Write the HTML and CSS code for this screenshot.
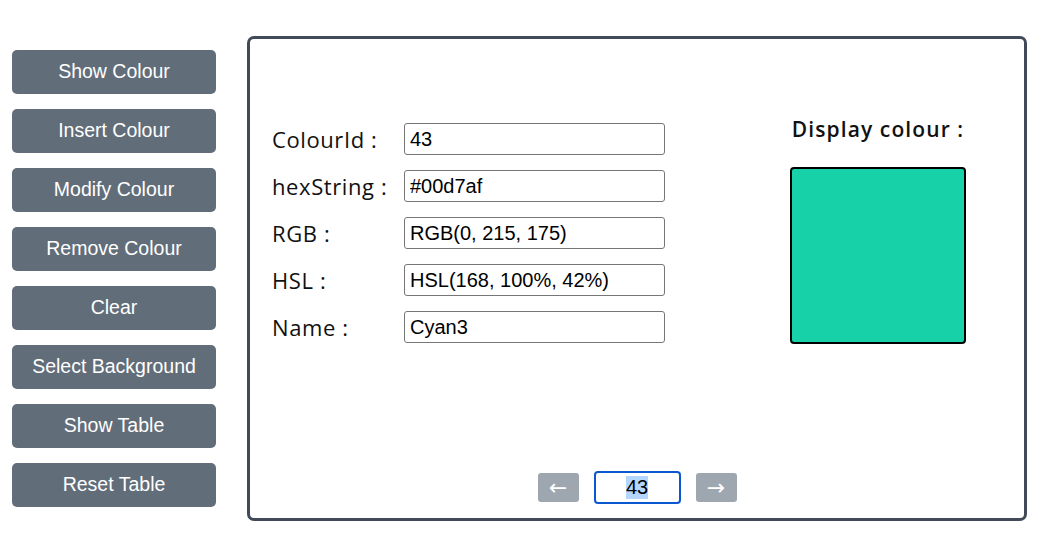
FILE: index.html
```html
<!DOCTYPE html>
<html>
<head>
<meta charset="utf-8">
<link rel="stylesheet" href="styles.css">
</head>
<body>
<div class="page">
  <div class="sidebar">
    <button class="side-btn">Show Colour</button>
    <button class="side-btn">Insert Colour</button>
    <button class="side-btn">Modify Colour</button>
    <button class="side-btn">Remove Colour</button>
    <button class="side-btn">Clear</button>
    <button class="side-btn">Select Background</button>
    <button class="side-btn">Show Table</button>
    <button class="side-btn">Reset Table</button>
  </div>
  <div class="panel">
    <div class="content">
      <div class="form">
        <div class="row"><label class="lbl">ColourId :</label><input class="field" value="43"></div>
        <div class="row"><label class="lbl">hexString :</label><input class="field" value="#00d7af"></div>
        <div class="row"><label class="lbl">RGB :</label><input class="field" value="RGB(0, 215, 175)"></div>
        <div class="row"><label class="lbl">HSL :</label><input class="field" value="HSL(168, 100%, 42%)"></div>
        <div class="row"><label class="lbl">Name :</label><input class="field" value="Cyan3"></div>
      </div>
      <div class="display">
        <div class="display-title">Display colour :</div>
        <div class="swatch" style="background:#17d1a9"></div>
      </div>
    </div>
    <div class="nav">
      <button class="nav-btn">&larr;</button>
      <div class="nav-input"><span class="sel">43</span></div>
      <button class="nav-btn">&rarr;</button>
    </div>
  </div>
</div>
</body>
</html>
```
FILE: styles.css
```css
* { box-sizing: border-box; }
html, body { margin: 0; padding: 0; background: #fff; }
body { font-family: "Liberation Sans", Arial, sans-serif; }
.page {
  display: flex;
  align-items: flex-start;
  padding: 36px 0 0 12px;
}
.sidebar {
  display: flex;
  flex-direction: column;
  gap: 15px;
  padding-top: 14px;
}
.side-btn {
  width: 204px;
  height: 44px;
  border: none;
  border-radius: 5px;
  background: #626d7a;
  color: #fff;
  font-family: "Liberation Sans", Arial, sans-serif;
  font-size: 19.5px;
  padding: 0 0 2px;
}
.panel {
  margin-left: 31px;
  width: 780px;
  height: 485px;
  border: 3px solid #414a58;
  border-radius: 7px;
  display: flex;
  flex-direction: column;
}
.content {
  display: flex;
  align-items: flex-start;
  padding: 84px 0 0 22px;
}
.form {
  display: flex;
  flex-direction: column;
  gap: 15px;
}
.row {
  display: flex;
  align-items: center;
  height: 32px;
}
.lbl {
  width: 132px;
  font-family: "Open Sans", "Noto Sans", sans-serif;
  font-size: 22px;
  letter-spacing: 0.6px;
  color: #111;
  white-space: nowrap;
  padding-bottom: 1px;
}
.field {
  width: 261px;
  height: 32px;
  border: 1px solid #767676;
  border-radius: 3px;
  padding: 0 5px;
  font-family: "Liberation Sans", Arial, sans-serif;
  font-size: 20px;
  color: #000;
}
.display {
  margin-left: 125px;
  margin-top: -9px;
  width: 176px;
  display: flex;
  flex-direction: column;
  align-items: center;
}
.display-title {
  font-family: "Open Sans", "Noto Sans", sans-serif;
  font-weight: 600;
  font-size: 21px;
  letter-spacing: 1.1px;
  color: #111;
  white-space: nowrap;
  height: 26px;
  line-height: 26px;
  margin-top: 2px;
}
.swatch {
  margin-top: 25px;
  width: 176px;
  height: 177px;
  border: 2px solid #000;
  border-radius: 4px;
}
.nav {
  margin-top: auto;
  margin-bottom: 14px;
  display: flex;
  align-items: center;
  justify-content: center;
  gap: 15px;
}
.nav-btn {
  width: 41px;
  height: 29px;
  border: none;
  border-radius: 3px;
  background: #9ea7b0;
  color: #fff;
  font-size: 22px;
  line-height: 29px;
  padding: 0;
  font-family: "DejaVu Sans", sans-serif;
}
.nav-input {
  width: 87px;
  height: 33px;
  border: 2px solid #0b57d0;
  border-radius: 4px;
  display: flex;
  align-items: center;
  justify-content: center;
  font-family: "Liberation Sans", Arial, sans-serif;
  font-size: 20px;
  color: #000;
}
.sel { background: #b4d5fe; line-height: 23px; }
```
